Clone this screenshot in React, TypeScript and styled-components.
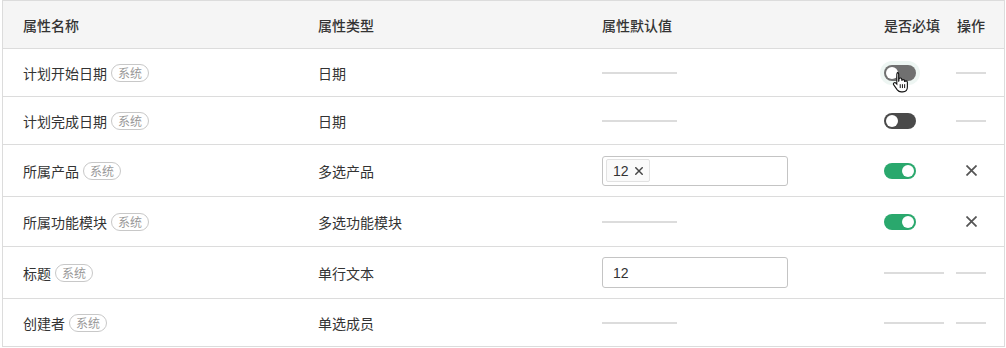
import { FC } from 'react';
import styled, { createGlobalStyle, css } from 'styled-components';

const GlobalStyle = createGlobalStyle`
  body {
    margin: 0;
    background: #fff;
    font-family: 'Liberation Sans', 'Noto Sans CJK SC', sans-serif;
    color: #333;
  }
`;

type Attr = {
  name: string;
  type: string;
  value: 'none' | 'tags' | 'text';
  required: 'hover' | 'off' | 'on' | 'none';
  removable: boolean;
  height: number;
};

const rows: Attr[] = [
  { name: '计划开始日期', type: '日期', value: 'none', required: 'hover', removable: false, height: 48 },
  { name: '计划完成日期', type: '日期', value: 'none', required: 'off', removable: false, height: 48 },
  { name: '所属产品', type: '多选产品', value: 'tags', required: 'on', removable: true, height: 52 },
  { name: '所属功能模块', type: '多选功能模块', value: 'none', required: 'on', removable: true, height: 50 },
  { name: '标题', type: '单行文本', value: 'text', required: 'none', removable: false, height: 52 },
  { name: '创建者', type: '单选成员', value: 'none', required: 'none', removable: false, height: 48 },
];

const Table = styled.div`
  margin-left: 2px;
  width: 1003px;
  border: 1px solid #dcdcdc;
  border-bottom: none;
  box-sizing: border-box;
  font-size: 14px;
`;

const Row = styled.div<{ $h: number; $head?: boolean }>`
  display: grid;
  grid-template-columns: 295px 284px 282px 80px 60px;
  height: ${(p) => p.$h}px;
  box-sizing: border-box;
  border-bottom: 1px solid #dcdcdc;
  background: ${(p) => (p.$head ? '#f5f5f5' : '#fff')};
  color: #333;
  ${(p) =>
    p.$head &&
    css`
      font-weight: 500;
      color: #333;
    `}
`;

const Cell = styled.div<{ $pl?: number }>`
  display: flex;
  align-items: center;
  padding-left: ${(p) => p.$pl ?? 20}px;
  position: relative;
`;

const Center = styled.div`
  width: 30px;
  display: flex;
  justify-content: center;
  align-items: center;
`;

const SysTag = styled.span`
  margin-left: 4px;
  height: 18px;
  padding: 0 6px;
  border: 1px solid #c8c8c8;
  border-radius: 10px;
  font-size: 12px;
  color: #999;
  display: inline-flex;
  align-items: center;
  box-sizing: border-box;
`;

const Dash = styled.span<{ $w: number }>`
  display: block;
  width: ${(p) => p.$w}px;
  height: 2px;
  background: #dcdcdc;
`;

const InputBox = styled.div<{ $h: number }>`
  width: 186px;
  height: ${(p) => p.$h}px;
  border: 1px solid #c4c4c4;
  border-radius: 3px;
  box-sizing: border-box;
  display: flex;
  align-items: center;
  padding: 0 3px;
`;

const InputText = styled.span`
  padding-left: 7px;
  font-size: 14px;
  color: #333;
`;

const Chip = styled.span`
  display: inline-flex;
  align-items: center;
  gap: 6px;
  height: 23px;
  padding: 0 6px;
  border: 1px solid #e2e2e2;
  border-radius: 2px;
  background: #fafafa;
  font-size: 14px;
  box-sizing: border-box;
`;

const Switch = styled.span<{ $state: 'hover' | 'off' | 'on' }>`
  position: relative;
  display: inline-block;
  width: 32px;
  height: 16px;
  border-radius: 8px;
  background: ${(p) => (p.$state === 'on' ? '#2aa86d' : p.$state === 'hover' ? '#707070' : '#4a4a4a')};
  box-shadow: ${(p) => (p.$state === 'hover' ? '0 0 0 4px #eef6f3' : 'none')};
  &::after {
    content: '';
    position: absolute;
    top: 2px;
    left: ${(p) => (p.$state === 'on' ? '18px' : '2px')};
    width: 12px;
    height: 12px;
    border-radius: 50%;
    background: #fff;
  }
`;

const Pointer = styled.svg`
  position: absolute;
  left: 28px;
  top: 22px;
  pointer-events: none;
`;

const Close: FC<{ size: number; color: string; w: number }> = ({ size, color, w }) => (
  <svg width={size} height={size} viewBox="0 0 10 10">
    <path d="M1 1 L9 9 M9 1 L1 9" stroke={color} strokeWidth={w} strokeLinecap="square" />
  </svg>
);

const Hand = () => (
  <Pointer width="18" height="22" viewBox="0 0 16 20">
    <path
      d="M4.5 1.5c.8 0 1.4.6 1.4 1.4v6.2l.2-.1V7.6c0-.8.6-1.3 1.3-1.3s1.3.5 1.3 1.3v1.3c.1-.7.6-1.1 1.3-1.1.7 0 1.3.6 1.3 1.3v.9c.1-.6.6-1 1.2-1 .7 0 1.3.6 1.3 1.3v4.3c0 2.5-1.6 4.4-4.2 4.4H8.1c-1.6 0-2.6-.7-3.5-1.8L1.4 12.6c-.5-.6-.4-1.4.2-1.8.6-.4 1.3-.3 1.8.2l.8.9V2.9c0-.8.5-1.4 1.3-1.4z"
      fill="#fff"
      stroke="#111"
      strokeWidth="1"
    />
    <path d="M7.3 12v3.5 M9.3 12v3.5 M11.3 12v3.5" stroke="#111" strokeWidth="0.9" />
  </Pointer>
);

const App: FC = () => (
  <>
    <GlobalStyle />
    <Table>
      <Row $h={48} $head>
        <Cell>属性名称</Cell>
        <Cell>属性类型</Cell>
        <Cell>属性默认值</Cell>
        <Cell>是否必填</Cell>
        <Cell $pl={12}>
          <Center>操作</Center>
        </Cell>
      </Row>
      {rows.map((r) => (
        <Row key={r.name} $h={r.height}>
          <Cell>
            {r.name}
            <SysTag>系统</SysTag>
          </Cell>
          <Cell>{r.type}</Cell>
          <Cell>
            {r.value === 'none' && <Dash $w={75} />}
            {r.value === 'tags' && (
              <InputBox $h={30}>
                <Chip>
                  12
                  <Close size={8} color="#444" w={1.8} />
                </Chip>
              </InputBox>
            )}
            {r.value === 'text' && (
              <InputBox $h={31}>
                <InputText>12</InputText>
              </InputBox>
            )}
          </Cell>
          <Cell>
            {r.required === 'none' ? <Dash $w={60} /> : <Switch $state={r.required} />}
            {r.required === 'hover' && <Hand />}
          </Cell>
          <Cell $pl={12}>
            <Center>{r.removable ? <Close size={11} color="#555" w={1.6} /> : <Dash $w={30} />}</Center>
          </Cell>
        </Row>
      ))}
    </Table>
  </>
);

export default App;
